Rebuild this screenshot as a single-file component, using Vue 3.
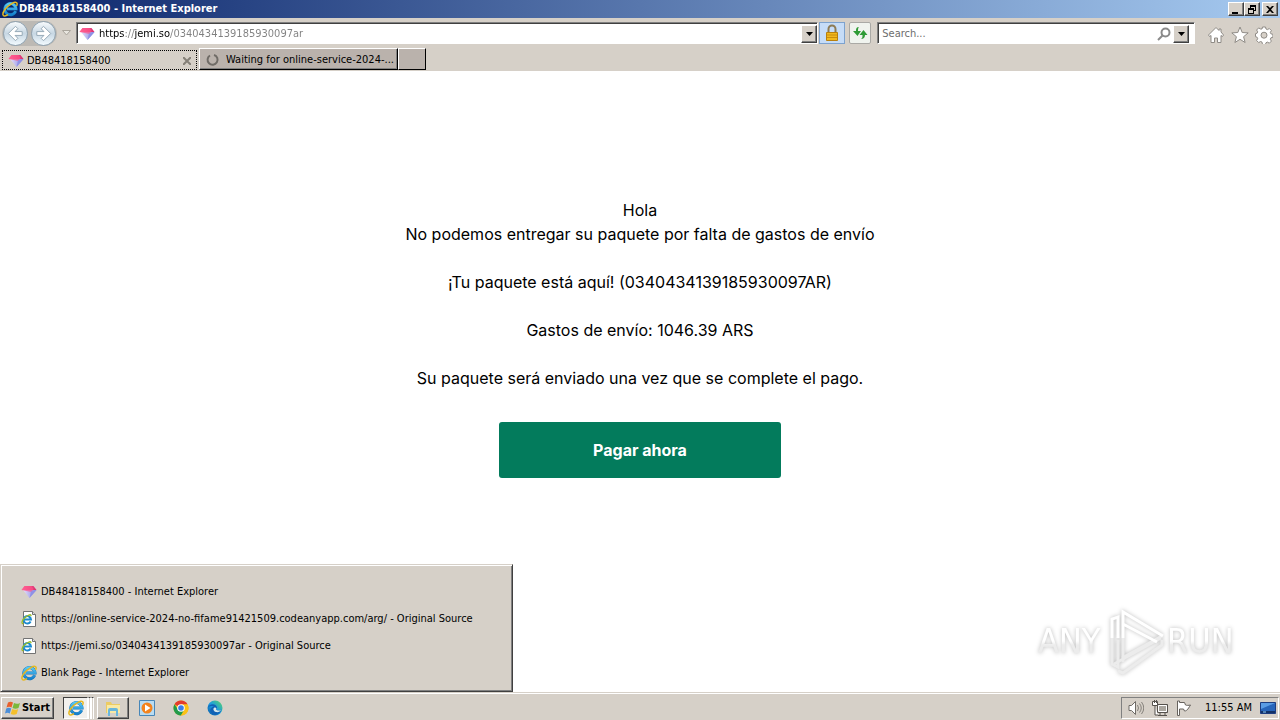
<script setup>
import { ref } from 'vue'

const address = ref('https://jemi.so/0340434139185930097ar')
const query = ref('')

const windows = [
  { icon: 'gem', title: 'DB48418158400 - Internet Explorer' },
  { icon: 'page', title: 'https://online-service-2024-no-fifame91421509.codeanyapp.com/arg/ - Original Source' },
  { icon: 'page', title: 'https://jemi.so/0340434139185930097ar - Original Source' },
  { icon: 'ie', title: 'Blank Page - Internet Explorer' },
]
</script>

<template>
  <div class="desktop">
    <svg class="sprite" aria-hidden="true">
      <defs>
        <linearGradient id="gemTop" x1="0" x2="1"><stop offset="0" stop-color="#ff8ab0" /><stop offset="1" stop-color="#d8286c" /></linearGradient>
        <linearGradient id="gemLow" x1="0" x2="1"><stop offset="0" stop-color="#e9defa" /><stop offset="1" stop-color="#7f86e0" /></linearGradient>
        <linearGradient id="blueE" x1="0" y1="0" x2="0" y2="1"><stop offset="0" stop-color="#58c8f4" /><stop offset="1" stop-color="#1580cc" /></linearGradient>
        <linearGradient id="edgeG" x1="0" y1="1" x2="1" y2="0"><stop offset="0" stop-color="#0c59a4" /><stop offset=".5" stop-color="#1b9de2" /><stop offset="1" stop-color="#5bd860" /></linearGradient>
      </defs>
      <symbol id="gem" viewBox="0 0 16 16">
        <path d="M3.500 2h9l3 4H.5z" fill="url(#gemTop)" />
        <path d="M2 6 8.500 14l7-8z" fill="url(#gemLow)" />
        <path d="M.5 6 3.500 2h7l2 3-2 3z" fill="#ff4f86" opacity=".7" />
        <path d="M10 7.500 15.500 6 8.500 14z" fill="#8f90e6" />
      </symbol>
      <symbol id="ie" viewBox="0 0 16 16">
        <path d="M13.600 10.300A5.600 5.600 0 1 1 14 7.900H5" fill="none" stroke="#1674b8" stroke-width="3" />
        <path d="M13.600 10.300A5.600 5.600 0 1 1 14 7.900H5" fill="none" stroke="url(#blueE)" stroke-width="2.400" />
        <path d="M14.500 5C16.200 1.500 14.200.2 9.800 2.600 4.500 5.500.2 11.200 1 13.900c.5 1.700 2.700 1.200 5-.2" fill="none" stroke="#e6b820" stroke-width="1.500" />
      </symbol>
      <symbol id="page" viewBox="0 0 16 16">
        <path d="M2.500.5h9l3 3v12h-12z" fill="#fff" stroke="#737373" />
        <path d="M11.500.5v3h3" fill="#ddd" stroke="#737373" />
        <path d="M9.600 10.500A3.700 3.700 0 1 1 10 8.500H3.500" fill="none" stroke="#1c8bd0" stroke-width="2" />
        <path d="M10 5.200C10.500 2.300 6 4.200 3 7.500.7 10 .2 13 2.500 12.700" fill="none" stroke="#9bbd23" stroke-width="1.300" />
      </symbol>
    </svg>

    <header class="titlebar">
      <svg class="icon"><use href="#ie" /></svg>
      <h1 class="title">DB48418158400 - Internet Explorer</h1>
      <button type="button" class="win-btn" aria-label="Minimize">
        <svg viewBox="0 0 10 9"><path d="M1 7h6v2H1z" /></svg>
      </button>
      <button type="button" class="win-btn" aria-label="Restore">
        <svg viewBox="0 0 10 9"><path d="M3 0h6v6H7V5h1V2H4v1H3zM1 3h6v6H1zM2 5v3h4V5z" fill-rule="evenodd" /></svg>
      </button>
      <button type="button" class="win-btn close" aria-label="Close">
        <svg viewBox="0 0 10 9"><path d="M1 1h2l2 2 2-2h2L6 4.500 9 8H7L5 6 3 8H1l3-3.500z" /></svg>
      </button>
    </header>

    <div class="toolbar">
      <div class="nav">
        <button type="button" class="nav-btn" aria-label="Back">
          <svg viewBox="0 0 24 24"><path d="M12 4.500 4.500 12l7.500 7.500 2.500-2.500L11.500 14H19v-4h-7.500l3-3z" /></svg>
        </button>
        <button type="button" class="nav-btn" aria-label="Forward">
          <svg viewBox="0 0 24 24"><path d="M12 4.500l7.500 7.500-7.500 7.500L9.500 17l3-3H5v-4h7.500l-3-3z" /></svg>
        </button>
      </div>
      <button type="button" class="recent" aria-label="Recent pages">
        <svg viewBox="0 0 9 6"><path d="M.5.5h8l-4 4.500z" fill="#e9e6df" stroke="#aaa59c" /></svg>
      </button>
      <div class="field address">
        <svg class="icon"><use href="#gem" /></svg>
        <input v-model="address" type="text" class="url" aria-label="Address" spellcheck="false">
        <button type="button" class="drop" aria-label="Show address list"><svg viewBox="0 0 7 4"><path d="M0 0h7L3.500 4z" /></svg></button>
      </div>
      <button type="button" class="tool lock" aria-label="Security report">
        <svg viewBox="0 0 16 18">
          <path d="M4.500 9V5a3.500 3.500 0 0 1 7 0v4" fill="none" stroke="#8d7b55" stroke-width="2" />
          <path d="M2.500 8.500h11v8h-11z" fill="#f2b91f" stroke="#b9800e" />
          <path d="M3 11h10M3 13.500h10" stroke="#c98d10" />
        </svg>
      </button>
      <button type="button" class="tool refresh" aria-label="Refresh">
        <svg viewBox="0 0 16 16">
          <path d="M7 2C4.500 2 4 3.500 4 6H1l4.500 5L9 6H6c0-2 0-3 1-4z" fill="#2f9b36" />
          <path d="M9 14c2.500 0 4-1.500 4-4h2.500L11.500 5 7.500 10H10.500c0 2 0 3-1.500 4z" fill="#2f9b36" />
        </svg>
      </button>
      <div class="field search">
        <input v-model="query" type="text" class="query" placeholder="Search..." aria-label="Search">
        <button type="button" class="find" aria-label="Search the web">
          <svg viewBox="0 0 14 14"><circle cx="8.500" cy="5.500" r="4" fill="#fff" stroke="#8a8a8a" stroke-width="2" /><path d="M5.500 8.500 1 13" stroke="#8a8a8a" stroke-width="2" /></svg>
        </button>
        <button type="button" class="drop" aria-label="Search options"><svg viewBox="0 0 7 4"><path d="M0 0h7L3.500 4z" /></svg></button>
      </div>
      <nav class="commands">
        <button type="button" class="command" aria-label="Home">
          <svg viewBox="0 0 18 18"><path d="M9 1.500 1.500 9l1 1.500L4 9.500v7h3.500V12h3v4.500H14v-7l1.500 1 1-1.500L14 6V3h-2v1.500z" /></svg>
        </button>
        <button type="button" class="command" aria-label="Favorites">
          <svg viewBox="0 0 18 18"><path d="m9 1 2.200 5.500 6 .4-4.600 3.800 1.500 5.800L9 13.300l-5.100 3.200 1.500-5.800L.8 6.900l6-.4z" /></svg>
        </button>
        <button type="button" class="command" aria-label="Tools">
          <svg viewBox="0 0 18 18"><path d="M7.500 1h3l.5 2 1.500.6 1.800-1.100 2.100 2.100-1.100 1.800.6 1.400 2 .5v3l-2 .5-.6 1.500 1.100 1.800-2.100 2.100-1.800-1.100-1.500.6-.5 1.800h-3L7 16.100l-1.500-.6-1.800 1.100-2.100-2.100 1.100-1.800-.6-1.500-1.600-.5v-3l1.600-.5.6-1.400-1.100-1.800 2.100-2.100L5.500 3 7 3z" /><circle cx="9" cy="9.200" r="3" fill="#d6d0c8" /></svg>
        </button>
      </nav>
    </div>

    <div class="tabs" role="tablist">
      <div class="tab active" role="tab" aria-selected="true">
        <svg class="icon"><use href="#gem" /></svg>
        <span class="tab-name">DB48418158400</span>
        <button type="button" class="tab-close" aria-label="Close tab"><svg viewBox="0 0 8 8"><path d="m0 0 8 8M8 0 0 8" stroke="#858078" stroke-width="2" /></svg></button>
      </div>
      <div class="tab" role="tab" aria-selected="false">
        <svg class="icon" viewBox="0 0 16 16"><path d="M5 3.500A5 5 0 1 0 9 3" fill="none" stroke="#706c67" stroke-width="2" /></svg>
        <span class="tab-name">Waiting for online-service-2024-...</span>
      </div>
      <button type="button" class="new-tab" aria-label="New tab"></button>
    </div>

    <main class="page">
      <p>Hola</p>
      <p>No podemos entregar su paquete por falta de gastos de envío</p>
      <p class="spaced">¡Tu paquete está aquí! (0340434139185930097AR)</p>
      <p class="spaced">Gastos de envío: 1046.39 ARS</p>
      <p class="spaced">Su paquete será enviado una vez que se complete el pago.</p>
      <button type="button" class="pay">Pagar ahora</button>

      <svg class="watermark" viewBox="0 0 208 76" role="img" aria-label="ANY RUN">
        <defs>
          <linearGradient id="fade" x1="0" y1="0" x2="0" y2="1"><stop offset=".5" stop-color="#fff" /><stop offset=".6" stop-color="#ececec" /></linearGradient>
        </defs>
        <text x="6" y="51">ANY</text>
        <g fill="none" stroke="#fff" stroke-width="3">
          <path d="M90 56 130 34M82 62l47-26M86 69l5 2 39-28v-5" stroke="#ececec" />
          <path d="M80 36v26l6 3V38M91 36v24" stroke="#ececec" />
          <path d="M80 36V17l6-2v21M91 36V10l40 24M91 22l34 18" />
        </g>
        <text x="135" y="51">RUN</text>
      </svg>

      <ul class="window-list">
        <li v-for="(win, i) in windows" :key="i">
          <button type="button" class="window-item">
            <svg class="icon"><use :href="'#' + win.icon" /></svg>
            <span>{{ win.title }}</span>
          </button>
        </li>
      </ul>
    </main>

    <footer class="taskbar">
      <button type="button" class="start">
        <svg class="icon" viewBox="0 0 16 16">
          <path d="M3 2.500c2-1.200 3.500-1 5 0L6.500 7.500c-1.500-1-3-1.200-5 0z" fill="#e8602c" />
          <path d="M9 3c1.800 1 3.500 1.200 6 0l-1.500 5c-2 1-4 1-6 0z" fill="#7bb83a" />
          <path d="M1.200 8.500c2-1.200 3.500-1 5 0l-1.400 5c-1.500-1-3-1.200-4.800 0z" fill="#4c8fd8" />
          <path d="M7.200 9c1.800 1 3.500 1.200 6 0l-1.500 5c-2 1-4 1-6 0z" fill="#f4c02c" />
        </svg>
        <span>Start</span>
      </button>
      <button type="button" class="task group" aria-label="Internet Explorer">
        <span class="front"><svg class="icon"><use href="#ie" /></svg></span>
        <span class="edge"></span>
        <span class="edge"></span>
      </button>
      <button type="button" class="task raised" aria-label="Windows Explorer">
        <svg class="icon" viewBox="0 0 16 16">
          <path d="M1 2h5l1 2h8v9H1z" fill="#eccb62" />
          <path d="M2 5h13v8H2z" fill="#f9e9a4" />
          <path d="M3 16V10q0-2 2-2h6q2 0 2 2v6h-2v-5H5v5z" fill="#69b6dc" />
        </svg>
      </button>
      <div class="pinned">
        <button type="button" class="pin" aria-label="Media Player">
          <svg class="icon" viewBox="0 0 16 16"><path d="M.5.5h15v15H.5z" fill="#b9dcf2" stroke="#4786b8" /><circle cx="8" cy="8" r="5.500" fill="#f3831d" /><path d="M6 4.500v7L11.500 8z" fill="#fff" /></svg>
        </button>
        <button type="button" class="pin" aria-label="Chrome">
          <svg class="icon" viewBox="0 0 16 16"><circle cx="8" cy="8" r="7.500" fill="#fbc116" /><path d="M8 8 1.500 4.200A7.500 7.500 0 0 1 14.500 4.200z" fill="#e33b2e" /><path d="M1.500 4.200A7.500 7.500 0 0 0 8 15.500L11.200 10 5 9.500z" fill="#229a4b" /><path d="M8 4.200h6.500A7.500 7.500 0 0 1 8 15.500l3.200-5.600z" fill="#fbc116" /><circle cx="8" cy="8" r="3.800" fill="#fff" /><circle cx="8" cy="8" r="2.800" fill="#3b7de8" /></svg>
        </button>
        <button type="button" class="pin" aria-label="Edge">
          <svg class="icon" viewBox="0 0 16 16"><circle cx="8" cy="8" r="7.500" fill="url(#edgeG)" /><path d="M.7 8C2 3.500 9 3 10 7.500c.2 1-.7 1.700-.7 1.700.5 1.500 3.700 1.600 5.200.2C13 15 7 16.500 4 13 2 10.500 4 7 7 6.500 4 5.200 1.500 6.500.7 8z" fill="#1161b5" /><path d="M7.500 7.500c-2 1-1 4 1.500 4.500 2 .5 4.500-.5 5.300-2-1.700.8-4.800.8-5.300-.8.8-.7.300-2-1.500-1.700z" fill="#d6e8ec" /></svg>
        </button>
      </div>
      <div class="tray">
        <svg class="icon" viewBox="0 0 16 16"><path d="M1 5.500h2.500l4-4v13l-4-4H1z" fill="#fff" stroke="#6f6b66" /><path d="M9.500 5q2 3 0 6M11.500 3.500q3.500 4.500 0 9M13.500 2q4.500 6 0 12" fill="none" stroke="#85817b" /></svg>
        <svg class="icon" viewBox="0 0 16 16"><path d="M5.500 4.500h10v8h-10z" fill="#aaa69f" stroke="#55514c" /><path d="M6.500 5.500h8v6h-8z" fill="none" stroke="#fff" /><path d="M8 13v2M13 13v2M6 15.500h9" stroke="#55514c" /><path d="M.5 1.500h5v4h-5zM3 6v9h3" fill="#fff" stroke="#55514c" /><path d="M2.500 0v3M4.500 0v3" stroke="#55514c" /></svg>
        <svg class="icon" viewBox="0 0 16 16"><path d="M1.500 1v14.500h2V9h4l1 2c2 0 3-1 6-6-2 .5-4 .5-5 0l-1-2.500h-5V1z" fill="#fff" stroke="#66625d" /></svg>
        <time class="clock">11:55 AM</time>
        <button type="button" class="show-desktop" aria-label="Show desktop">
          <svg class="icon" viewBox="0 0 16 16"><path d="M.5 2.500h15v11H.5z" fill="#2765ba" stroke="#1d3d80" /><path d="M1 3h14L1 9z" fill="#5a9ce4" /><path d="M1 12h14" stroke="#123268" stroke-width="2" /><path d="M3 12h3" stroke="#8fd0ff" /></svg>
        </button>
      </div>
    </footer>
  </div>
</template>

<style>
body { margin: 0; background: #fff; }
</style>

<style scoped>
.desktop {
  --face: #d6d0c8;
  --dark: #404040;
  --shade: #808080;
  display: flex;
  flex-direction: column;
  min-height: 100vh;
  overflow: hidden;
  font: 11px/14px "DejaVu Sans Condensed", "DejaVu Sans", sans-serif;
  color: #000;
}
.desktop * { box-sizing: border-box; }
.sprite { position: absolute; width: 0; height: 0; }
.icon { display: block; flex: none; width: 16px; height: 16px; }
button { margin: 0; padding: 0; border: 0; background: none; color: inherit; font: inherit; cursor: pointer; }
input { min-width: 0; margin: 0; padding: 0; border: 0; outline: 0; background: none; font: inherit; }
ul { margin: 0; padding: 0; list-style: none; }
p { margin: 0; }

.titlebar {
  display: flex;
  align-items: center;
  height: 18px;
  padding: 0 2px;
  background: linear-gradient(90deg, #0a246a, #a6caf0);
  color: #fff;
}
.title { flex: 1; margin: 0; padding-left: 1px; font-size: 11px; font-weight: 700; line-height: 16px; white-space: nowrap; }
.win-btn {
  display: flex;
  align-items: center;
  justify-content: center;
  width: 16px;
  height: 14px;
  border: 1px solid;
  border-color: #fff var(--dark) var(--dark) #fff;
  background: var(--face);
  box-shadow: inset -1px -1px var(--shade);
}
.win-btn svg { width: 10px; height: 9px; }
.win-btn.close { margin-left: 2px; }

.toolbar { display: flex; align-items: center; height: 30px; padding: 0 7px 0 2px; background: var(--face); }
.nav { display: flex; gap: 3px; padding: 0 1px; border-radius: 14px; background: #bcb9b4; }
.nav-btn { width: 25px; height: 25px; border: 1px solid #8fa2b0; border-radius: 50%; background: linear-gradient(#f7fafc, #c7d7e3 50%, #f2fafe); }
.nav-btn svg { display: block; width: 23px; height: 23px; fill: #fff; stroke: #93a7b5; }
.recent { display: flex; justify-content: center; flex: none; width: 19px; }
.recent svg { width: 9px; height: 6px; }
.field {
  display: flex;
  align-items: center;
  height: 22px;
  border: 1px solid;
  border-color: var(--shade) #fff #fff var(--shade);
  background: #fff;
  box-shadow: inset 1px 1px var(--dark);
}
.address { flex: 1; padding: 1px 0 0 2px; }
/* scheme and host are black, the rest of the address is grey */
.url {
  flex: 1;
  height: 16px;
  margin-left: 4px;
  background: linear-gradient(90deg, #000 26px, #808080 26px 35px, #000 35px 71px, #808080 71px);
  background-clip: text;
  -webkit-text-fill-color: transparent;
}
.drop {
  display: flex;
  align-items: center;
  justify-content: center;
  flex: none;
  width: 16px;
  height: 18px;
  border: 1px solid;
  border-color: #fff var(--dark) var(--dark) #fff;
  background: var(--face);
  box-shadow: inset -1px -1px var(--shade);
}
.drop svg { width: 7px; height: 4px; }
.tool { display: flex; align-items: center; justify-content: center; flex: none; height: 22px; }
.tool svg { width: 16px; height: 18px; }
.lock { width: 26px; margin-left: 1px; border: 1px solid #7da2ce; background: #c6dcf7; }
.refresh { width: 22px; margin-left: 4px; border: 1px solid #aaa9a5; border-radius: 2px; background: #f0f3ee; }
.search { width: 25%; margin-left: 6px; padding: 1px 5px 0 4px; }
.query { flex: 1; height: 16px; color: #6d6d6d; }
.query::placeholder { color: #6d6d6d; opacity: 1; }
.find { width: 14px; height: 14px; margin-right: 2px; }
.find svg { display: block; width: 14px; height: 14px; }
.commands { display: flex; gap: 6px; padding: 3px 0 0 12px; }
.command { width: 18px; height: 18px; }
.command svg { display: block; width: 18px; height: 18px; fill: #fff; stroke: #8f8b86; }

.tabs { display: flex; height: 23px; padding: 0 2px 1px; background: var(--face); }
.tab { display: flex; align-items: center; width: 199px; padding: 1px 5px 0; border: 1px solid; border-color: #fff #000 #000 #fff; background: #bab2ac; box-shadow: inset -1px -1px var(--shade); }
.tab.active { width: 195px; margin: 2px 2px 0 0; border: 1px dotted #000; background: var(--face); box-shadow: none; }
.tab-name { flex: 1; padding-left: 5px; white-space: nowrap; }
.tab.active .tab-name { padding-left: 3px; }
.tab-close svg { display: block; width: 8px; height: 8px; }
.new-tab { width: 28px; border: 1px solid; border-color: #fff #000 #000 #fff; background: #bab2ac; }

.page {
  position: relative;
  display: flex;
  flex: 1;
  flex-direction: column;
  align-items: center;
  padding: 127px 16px 0;
  background: #fff;
  font: 16px/24px Inter, sans-serif;
  text-align: center;
}
.spaced { margin-top: 24px; }
.pay { width: 282px; height: 56px; margin-top: 32px; border-radius: 3px; background: #037b5c; color: #fff; font-weight: 700; }
.watermark { position: absolute; right: 40px; bottom: 14px; width: 208px; height: 76px; filter: drop-shadow(0 0 2px #bbb); }
.watermark text { fill: url(#fade); font: 34px "DejaVu Sans Condensed", "DejaVu Sans", sans-serif; }

.window-list {
  position: absolute;
  bottom: 0;
  left: 0;
  width: 513px;
  padding: 13px 16px 5px 20px;
  border: 1px solid;
  border-color: var(--face) var(--dark) var(--dark) var(--face);
  background: var(--face);
  box-shadow: inset 1px 1px #fff, inset -1px -1px var(--shade);
  font: 11px/14px "DejaVu Sans Condensed", "DejaVu Sans", sans-serif;
}
.window-item { display: flex; align-items: center; gap: 4px; width: 100%; height: 27px; text-align: left; white-space: nowrap; }

.taskbar {
  display: flex;
  align-items: center;
  height: 28px;
  padding: 2px 1px 0;
  border-top: 1px solid var(--face);
  background: var(--face);
  box-shadow: inset 0 1px #fff;
}
.start, .raised {
  display: flex;
  align-items: center;
  justify-content: center;
  height: 22px;
  border: 1px solid;
  border-color: #fff var(--dark) var(--dark) #fff;
  box-shadow: inset -1px -1px var(--shade);
}
.start { gap: 1px; width: 53px; font-weight: 700; }
.group { display: flex; width: 31px; height: 22px; margin-left: 9px; }
.front { display: flex; align-items: center; justify-content: center; width: 25px; border: 1px solid; border-color: var(--dark) #fff #fff var(--dark); background: #f2f0ed; }
.edge { width: 3px; border-top: 1px solid var(--dark); border-right: 1px solid #fff; border-left: 1px solid #fff; }
.raised { width: 32px; margin-left: 3px; }
.pinned { display: flex; gap: 18px; margin-left: 10px; }
.tray {
  display: flex;
  align-items: center;
  gap: 8px;
  height: 22px;
  margin-left: auto;
  padding: 0 2px 0 6px;
  border: 1px solid;
  border-color: var(--shade) #fff #fff var(--shade);
}
.clock { padding-left: 5px; white-space: nowrap; }
</style>
